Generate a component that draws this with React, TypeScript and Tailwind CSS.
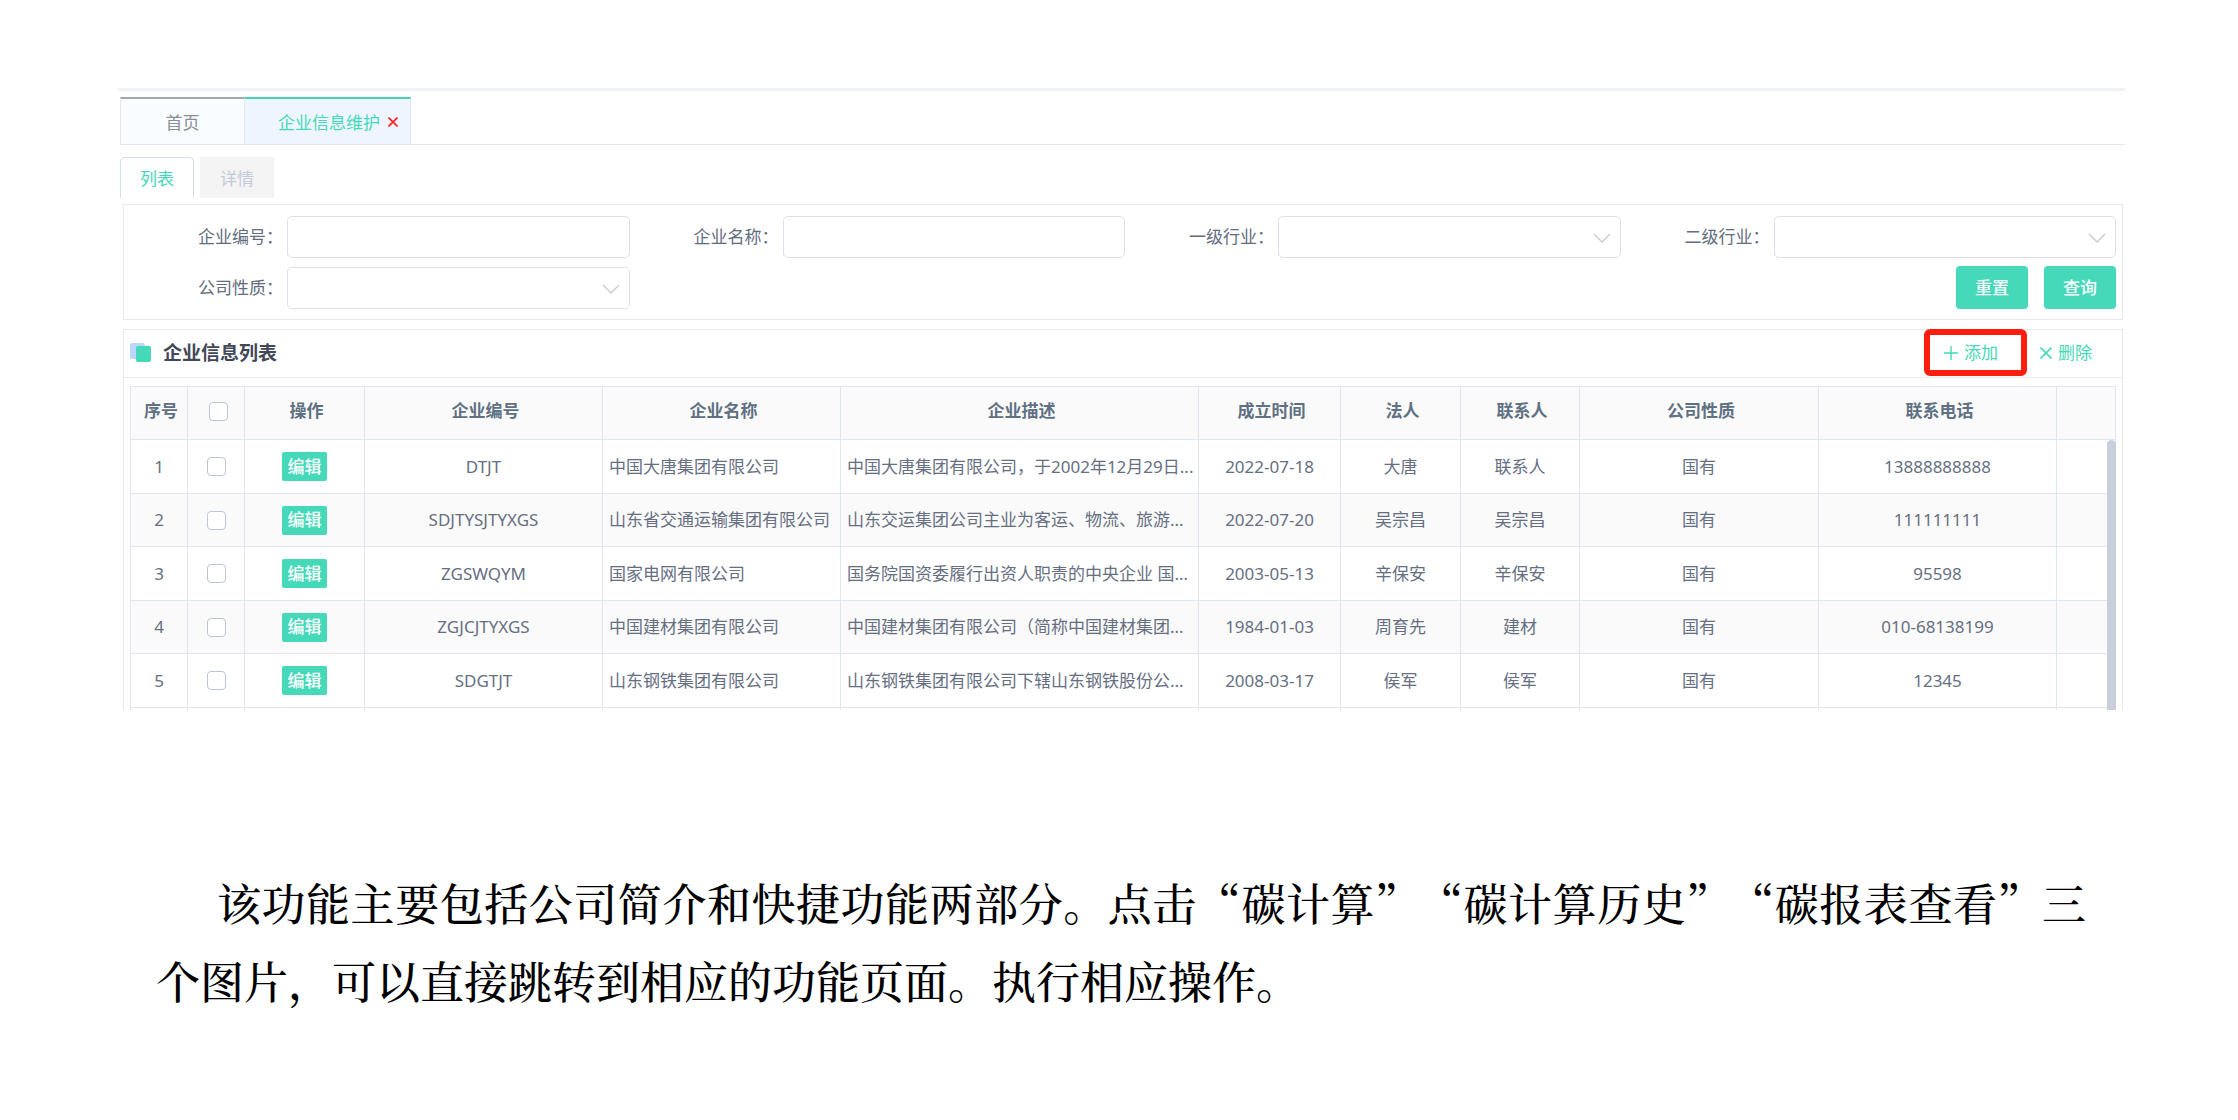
import { useId } from "react";

type Company = {
  code: string;
  name: string;
  description: string;
  founded: string;
  legal: string;
  contact: string;
  nature: string;
  phone: string;
};

const companies: Company[] = [
  { code: "DTJT", name: "中国大唐集团有限公司", description: "中国大唐集团有限公司，于2002年12月29日...", founded: "2022-07-18", legal: "大唐", contact: "联系人", nature: "国有", phone: "13888888888" },
  { code: "SDJTYSJTYXGS", name: "山东省交通运输集团有限公司", description: "山东交运集团公司主业为客运、物流、旅游...", founded: "2022-07-20", legal: "吴宗昌", contact: "吴宗昌", nature: "国有", phone: "111111111" },
  { code: "ZGSWQYM", name: "国家电网有限公司", description: "国务院国资委履行出资人职责的中央企业 国...", founded: "2003-05-13", legal: "辛保安", contact: "辛保安", nature: "国有", phone: "95598" },
  { code: "ZGJCJTYXGS", name: "中国建材集团有限公司", description: "中国建材集团有限公司（简称中国建材集团...", founded: "1984-01-03", legal: "周育先", contact: "建材", nature: "国有", phone: "010-68138199" },
  { code: "SDGTJT", name: "山东钢铁集团有限公司", description: "山东钢铁集团有限公司下辖山东钢铁股份公...", founded: "2008-03-17", legal: "侯军", contact: "侯军", nature: "国有", phone: "12345" },
];

const headers = ["企业编号", "企业名称", "企业描述", "成立时间", "法人", "联系人", "公司性质", "联系电话"];

function Field({ label, select = false }: { label: string; select?: boolean }) {
  const id = useId();
  const box = "h-[42px] w-full rounded-[5px] border border-[#dfe1e9] bg-white px-3 outline-none";
  return (
    <div className="flex items-center">
      <label htmlFor={id} className="w-[153px] shrink-0 pr-1 text-right text-[#636d80]">
        {label}：
      </label>
      <div className="relative min-w-0 flex-1">
        {select ? (
          <>
            <select id={id} className={`${box} appearance-none`} defaultValue="">
              <option value="" />
            </select>
            <svg viewBox="0 0 18 10" className="pointer-events-none absolute top-[17px] right-2.5 h-2.5 w-[18px]" fill="none" stroke="#cccdd0" strokeWidth="1.5">
              <path d="M1 1l8 8 8-8" />
            </svg>
          </>
        ) : (
          <input id={id} type="text" className={box} />
        )}
      </div>
    </div>
  );
}

function Check({ label }: { label: string }) {
  return (
    <input
      type="checkbox"
      aria-label={label}
      className="block size-[19px] mx-auto appearance-none rounded-[4px] border border-[#b9c6da] bg-white checked:bg-[#45d9b9]"
    />
  );
}

function CompanyTable() {
  const head = "border-r border-b border-[#e0e6ed] pt-0 pr-0 pb-1 pl-1 text-center";
  const cell = "border-r border-b border-[#e0e6ed] p-0 text-center";
  const left = "overflow-hidden whitespace-nowrap border-r border-b border-[#e0e6ed] pl-1.5 text-left";
  return (
    <div className="relative border-t border-l border-[#e0e6ed]">
      <table className="w-full table-fixed border-separate border-spacing-0 text-[#666f82]">
        <colgroup>
          <col className="w-[57px]" />
          <col className="w-[57px]" />
          <col className="w-[120px]" />
          <col className="w-[238px]" />
          <col className="w-[238px]" />
          <col className="w-[358px]" />
          <col className="w-[142px]" />
          <col className="w-[120px]" />
          <col className="w-[119px]" />
          <col className="w-[239px]" />
          <col className="w-[238px]" />
          <col className="w-[59px]" />
        </colgroup>
        <thead>
          <tr className="h-[53px] bg-[#fafafa] text-[#5f7083]">
            <th className={head}>序号</th>
            <th className={head}>
              <Check label="全选" />
            </th>
            <th className={head}>操作</th>
            {headers.map((h) => (
              <th key={h} className={head}>{h}</th>
            ))}
            <td className={cell} />
          </tr>
        </thead>
        <tbody>
          {companies.map((c, i) => (
            <tr key={c.code} className="odd:h-[54px] even:h-[53px] even:bg-[#fafafa]">
              <td className={cell}>{i + 1}</td>
              <td className={cell}>
                <Check label={c.name} />
              </td>
              <td className={cell}>
                <button type="button" className="block mx-auto h-[29px] w-[45px] rounded-[2px] bg-[#45d9b9] font-medium text-white">编辑</button>
              </td>
              <td className={cell}>{c.code}</td>
              <td className={left}>{c.name}</td>
              <td className={left}>{c.description}</td>
              <td className={cell}>{c.founded}</td>
              <td className={cell}>{c.legal}</td>
              <td className={cell}>{c.contact}</td>
              <td className={cell}>{c.nature}</td>
              <td className={cell}>{c.phone}</td>
              <td className={cell} />
            </tr>
          ))}
          <tr aria-hidden="true" className="h-0.5">
            {Array.from({ length: 12 }, (_, i) => (
              <td key={i} className="border-r border-[#e0e6ed] p-0" />
            ))}
          </tr>
        </tbody>
      </table>
      <div className="absolute top-[53px] right-0 bottom-0 w-[9px] rounded-t-full bg-[#c9d0dc]" />
    </div>
  );
}

export default function App() {
  return (
    <main className="min-h-screen bg-white pt-[88px] pb-10 font-['Noto_Sans','Noto_Sans_CJK_SC',sans-serif] text-[17px] leading-6">
      <div className="ml-[118px] mr-[113px] h-[3px] bg-[#eff3f8]" />
      <div className="ml-[120px] mr-[113px] pt-1.5">
        <nav className="flex h-12 border-b border-[#e4e7ed]">
          <button type="button" className="w-[124px] border-t-2 border-l border-t-[#a4a6ad] border-l-[#e4e7ed] bg-[#fafdff] pt-0.5 text-[#8b8e96]">
            首页
          </button>
          <div className="flex w-[167px] items-center justify-end gap-2 border-x border-t-2 border-x-[#e1e7f0] border-t-[#3fd6b5] bg-[#eff5ff] pr-3">
            <a href="#company" className="pt-0.5 text-[#45d9b9]">企业信息维护</a>
            <button type="button" aria-label="关闭">
              <svg viewBox="0 0 10 10" className="size-2.5" stroke="#ff1f1f" strokeWidth="1.6">
                <path d="M0.5 0.5l9 9M9.5 0.5l-9 9" />
              </svg>
            </button>
          </div>
        </nav>
        <div className="mt-3 flex gap-1.5">
          <button type="button" className="h-[41px] w-[74px] rounded-t-[5px] border border-b-0 border-[#d3dce9] pt-0.5 text-[#45d9b9]">列表</button>
          <button type="button" disabled className="h-[41px] w-[74px] bg-[#f4f4f4] pt-0.5 text-[#c3cad8]">详情</button>
        </div>
      </div>

      <div className="ml-[123px] mr-[115px]">
        <form className="mt-1.5 border border-[#e8eaef] pt-[11px] pr-1.5 pb-2.5 pl-2.5" onSubmit={(e) => e.preventDefault()}>
          <div className="grid grid-cols-4 gap-y-2">
            <Field label="企业编号" />
            <Field label="企业名称" />
            <Field label="一级行业" select />
            <Field label="二级行业" select />
            <Field label="公司性质" select />
            <div className="col-span-3 flex justify-end gap-4">
              <button type="reset" className="h-[43px] w-[72px] rounded-[4px] bg-[#45d9b9] font-medium text-white">重置</button>
              <button type="submit" className="h-[43px] w-[72px] rounded-[4px] bg-[#45d9b9] font-medium text-white">查询</button>
            </div>
          </div>
        </form>

        <section className="mt-[9px] border border-b-0 border-[#e8eaef]">
          <header className="flex h-12 items-center border-b border-[#e8eaef] pr-[30px] pb-0.5 pl-1.5">
            <svg viewBox="0 0 21 20" className="mr-3 h-5 w-[21px]">
              <rect width="15" height="16" rx="2" fill="#bcd7ff" />
              <rect x="6" y="3" width="15" height="16" rx="2" fill="#45d9b9" />
            </svg>
            <h2 className="text-[19px] font-bold text-[#414756]">企业信息列表</h2>
            <div className="ml-auto flex items-center gap-[42px] text-[#45d9b9]">
              <button type="button" className="relative flex items-center gap-1.5">
                <span className="pointer-events-none absolute -top-3 -right-[29px] -bottom-[11px] -left-5 rounded-[6px] border-6 border-[#ff1d10]" />
                <svg viewBox="0 0 14 14" className="size-3.5" stroke="currentColor" strokeWidth="1.4">
                  <path d="M7 0v14M0 7h14" />
                </svg>
                添加
              </button>
              <button type="button" className="flex items-center gap-1.5">
                <svg viewBox="0 0 12 12" className="size-3" stroke="currentColor" strokeWidth="1.6">
                  <path d="M0.5 0.5l11 11M11.5 0.5l-11 11" />
                </svg>
                删除
              </button>
            </div>
          </header>
          <div className="px-1.5 pt-2">
            <CompanyTable />
          </div>
        </section>
      </div>

      <p className="mt-[153px] mr-[152px] ml-[156px] indent-[61px] text-justify font-['Noto_Serif_CJK_SC','Noto_Sans_CJK_SC',serif] text-[44px] leading-[78px] font-medium text-black [text-spacing-trim:space-all]" lang="zh-CN">
        该功能主要包括公司简介和快捷功能两部分。点击“碳计算”“碳计算历史”“碳报表查看”三个图片，可以直接跳转到相应的功能页面。执行相应操作。
      </p>
    </main>
  );
}
